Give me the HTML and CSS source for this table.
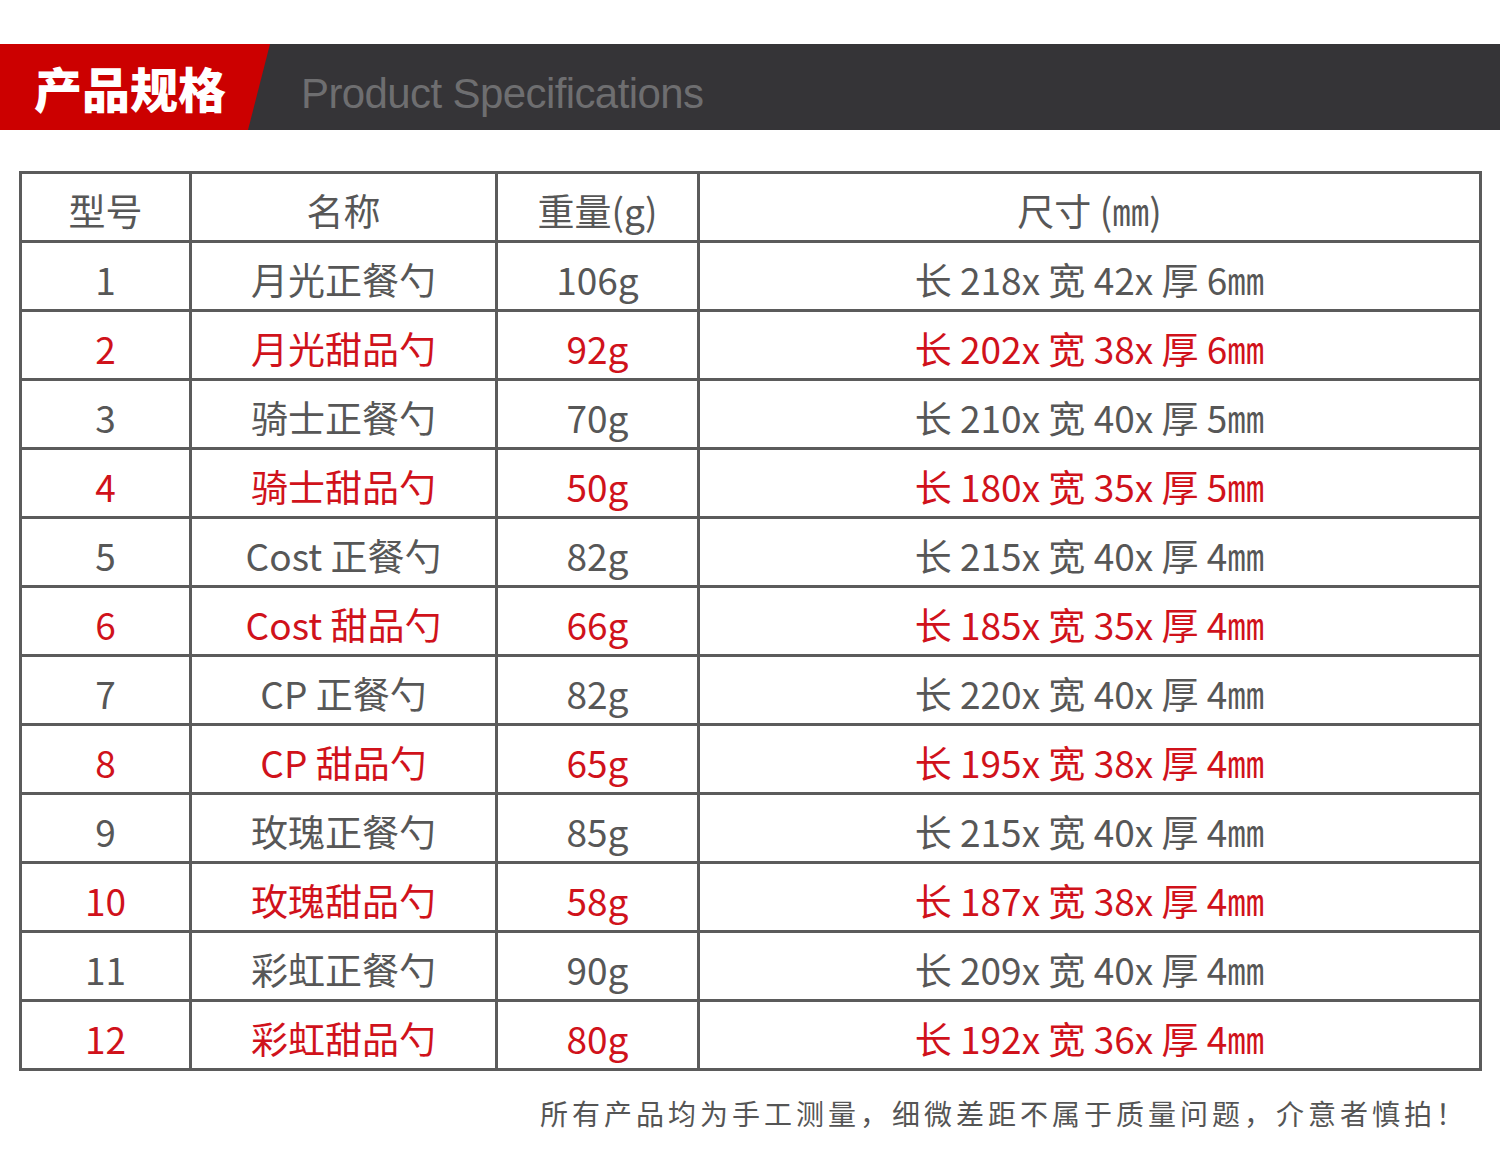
FILE: index.html
```html
<!DOCTYPE html>
<html lang="zh-CN">
<head>
<meta charset="utf-8">
<title>产品规格</title>
<link rel="stylesheet" href="styles.css">
</head>
<body>
<div class="page">
  <header class="band">
    <div class="band-red"><span class="band-title">产品规格</span></div>
    <div class="band-sub">Product Specifications</div>
  </header>

  <table class="spec">
    <colgroup>
      <col class="c1"><col class="c2"><col class="c3"><col class="c4">
    </colgroup>
    <thead>
      <tr><th>型号</th><th>名称</th><th>重量(g)</th><th>尺寸 (㎜)</th></tr>
    </thead>
    <tbody>
      <tr><td>1</td><td>月光正餐勺</td><td>106g</td><td>长 218x 宽 42x 厚 6㎜</td></tr>
      <tr class="red"><td>2</td><td>月光甜品勺</td><td>92g</td><td>长 202x 宽 38x 厚 6㎜</td></tr>
      <tr><td>3</td><td>骑士正餐勺</td><td>70g</td><td>长 210x 宽 40x 厚 5㎜</td></tr>
      <tr class="red"><td>4</td><td>骑士甜品勺</td><td>50g</td><td>长 180x 宽 35x 厚 5㎜</td></tr>
      <tr><td>5</td><td>Cost 正餐勺</td><td>82g</td><td>长 215x 宽 40x 厚 4㎜</td></tr>
      <tr class="red"><td>6</td><td>Cost 甜品勺</td><td>66g</td><td>长 185x 宽 35x 厚 4㎜</td></tr>
      <tr><td>7</td><td>CP 正餐勺</td><td>82g</td><td>长 220x 宽 40x 厚 4㎜</td></tr>
      <tr class="red"><td>8</td><td>CP 甜品勺</td><td>65g</td><td>长 195x 宽 38x 厚 4㎜</td></tr>
      <tr><td>9</td><td>玫瑰正餐勺</td><td>85g</td><td>长 215x 宽 40x 厚 4㎜</td></tr>
      <tr class="red"><td>10</td><td>玫瑰甜品勺</td><td>58g</td><td>长 187x 宽 38x 厚 4㎜</td></tr>
      <tr><td>11</td><td>彩虹正餐勺</td><td>90g</td><td>长 209x 宽 40x 厚 4㎜</td></tr>
      <tr class="red"><td>12</td><td>彩虹甜品勺</td><td>80g</td><td>长 192x 宽 36x 厚 4㎜</td></tr>
    </tbody>
  </table>

  <p class="note">所有产品均为手工测量，细微差距不属于质量问题，介意者慎拍！</p>
</div>
</body>
</html>
```

FILE: styles.css
```css
html, body {
  margin: 0;
  padding: 0;
  background: #ffffff;
}

.page {
  width: 1500px;
  padding-top: 44px;
  font-family: "Noto Sans CJK SC", "Noto Sans", sans-serif;
}

.band {
  display: flex;
  align-items: stretch;
  height: 86px;
  background: #353437;
}

.band-red {
  width: 270px;
  background: #cc0000;
  clip-path: polygon(0 0, 100% 0, calc(100% - 22px) 100%, 0 100%);
  display: flex;
  align-items: center;
  padding-left: 34px;
  box-sizing: border-box;
}

.band-title {
  color: #ffffff;
  font-size: 48px;
  font-weight: 900;
  line-height: 1;
}

.band-sub {
  display: flex;
  align-items: center;
  padding-left: 31px;
  padding-top: 14px;
  color: #6e6e70;
  font-family: "Liberation Sans", Arial, sans-serif;
  font-size: 42px;
  letter-spacing: -0.6px;
}

.spec {
  margin: 41px 0 0 19px;
  width: 1460px;
  border-collapse: collapse;
  table-layout: fixed;
  border: 3px solid #5b5b5b;
}

.c1 { width: 170px; }
.c2 { width: 306px; }
.c3 { width: 202px; }
.c4 { width: 782px; }

.spec th,
.spec td {
  border: 3px solid #5b5b5b;
  height: 59px;
  padding: 7px 0 0 0;
  text-align: center;
  vertical-align: middle;
  color: #575757;
  font-size: 37px;
  font-weight: 400;
  line-height: 1;
}

.spec tr.red td {
  color: #d0121b;
}

.note {
  margin: 22px 32px 0 0;
  text-align: right;
  color: #555555;
  font-size: 28px;
  letter-spacing: 4px;
}
```
